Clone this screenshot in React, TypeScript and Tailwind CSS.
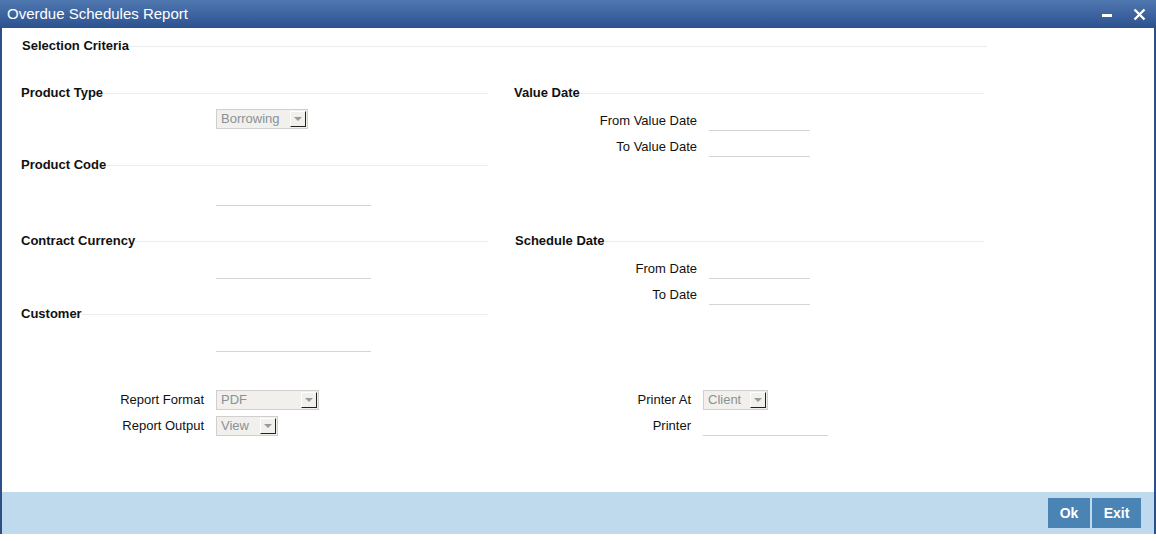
import React from "react";

const font = { fontFamily: '"Liberation Sans", Arial, sans-serif' };

function Heading({ text }: { text: string }) {
  return (
    <div className="flex items-center h-[16px]">
      <span className="text-[13px] font-bold text-[#111] leading-[16px] whitespace-nowrap">{text}</span>
      <div className="flex-1 h-px bg-[#ececec]" />
    </div>
  );
}

function Select({ value, w }: { value: string; w: string }) {
  return (
    <div className={`flex items-center h-[20px] bg-[#f1f0ec] border border-[#cfcfcf] ${w}`}>
      <span className="flex-1 pl-[4px] text-[13px] text-[#8a9098] leading-[18px]">{value}</span>
      <div className="w-[16px] h-[16px] mr-[1px] bg-[#f1f0ec] border-r border-b border-r-[#222] border-b-[#222] border-t border-l border-t-white border-l-white flex items-center justify-center">
        <svg width="8" height="5" viewBox="0 0 8 5">
          <path d="M0 0 H8 L4 4 Z" fill="#9a9a9a" />
        </svg>
      </div>
    </div>
  );
}

function LineInput({ w }: { w: string }) {
  return <div className={`h-[20px] border-b border-[#d4d4d4] ${w}`} />;
}

function Row({ label, labelW, children, mt }: { label: string; labelW: string; children: React.ReactNode; mt: string }) {
  return (
    <div className={`flex items-center h-[20px] ${mt}`}>
      <span className={`${labelW} text-right text-[13px] text-[#111] pr-[12px] leading-[16px]`}>{label}</span>
      {children}
    </div>
  );
}

export default function App() {
  return (
    <div style={font} className="w-[1156px] h-[541px] bg-white flex flex-col overflow-hidden">
      <div className="flex flex-col h-[534px] border-l-2 border-r-2 border-[#2c4f86]">
        <div className="h-[28px] flex items-center justify-between bg-gradient-to-b from-[#5078b0] to-[#2c5190] -mx-[2px] px-[7px]">
          <span className="text-white text-[15px] leading-[18px]">Overdue Schedules Report</span>
          <div className="flex items-center gap-[21px] pr-[3px]">
            <div className="w-[10px] h-[3px] bg-white mt-[2px]" />
            <svg width="13" height="13" viewBox="0 0 13 13">
              <path d="M1.5 1.5 L11.5 11.5 M11.5 1.5 L1.5 11.5" stroke="white" strokeWidth="2.4" />
            </svg>
          </div>
        </div>

        <div className="h-[464px] flex flex-col">
          <div className="mt-[10px] ml-[20px] w-[965px]">
            <Heading text="Selection Criteria" />
          </div>

          <div className="flex items-start mt-[31px]">
            <div className="ml-[19px] w-[467px] flex flex-col">
              <Heading text="Product Type" />
              <div className="mt-[8px] ml-[195px]">
                <Select value="Borrowing" w="w-[92px]" />
              </div>
              <div className="mt-[28px]">
                <Heading text="Product Code" />
              </div>
              <div className="mt-[13px] ml-[195px]">
                <LineInput w="w-[155px]" />
              </div>
              <div className="mt-[27px]">
                <Heading text="Contract Currency" />
              </div>
              <div className="mt-[10px] ml-[195px]">
                <LineInput w="w-[155px]" />
              </div>
              <div className="mt-[27px]">
                <Heading text="Customer" />
              </div>
              <div className="mt-[10px] ml-[195px]">
                <LineInput w="w-[155px]" />
              </div>
            </div>

            <div className="ml-[26px] w-[470px] flex flex-col">
              <Heading text="Value Date" />
              <Row label="From Value Date" labelW="w-[195px]" mt="mt-[10px]">
                <LineInput w="w-[101px]" />
              </Row>
              <Row label="To Value Date" labelW="w-[195px]" mt="mt-[6px]">
                <LineInput w="w-[101px]" />
              </Row>
              <div className="mt-[76px] ml-[1px]">
                <Heading text="Schedule Date" />
              </div>
              <Row label="From Date" labelW="w-[195px]" mt="mt-[10px]">
                <LineInput w="w-[101px]" />
              </Row>
              <Row label="To Date" labelW="w-[195px]" mt="mt-[6px]">
                <LineInput w="w-[101px]" />
              </Row>
            </div>
          </div>

          <div className="flex items-start mt-[38px]">
            <div className="ml-[19px] w-[492px] flex flex-col">
              <Row label="Report Format" labelW="w-[195px]" mt="mt-0">
                <Select value="PDF" w="w-[103px]" />
              </Row>
              <Row label="Report Output" labelW="w-[195px]" mt="mt-[6px]">
                <Select value="View" w="w-[62px]" />
              </Row>
            </div>
            <div className="flex flex-col">
              <Row label="Printer At" labelW="w-[190px]" mt="mt-0">
                <Select value="Client" w="w-[65px]" />
              </Row>
              <Row label="Printer" labelW="w-[190px]" mt="mt-[6px]">
                <LineInput w="w-[125px]" />
              </Row>
            </div>
          </div>
        </div>

        <div className="flex-1 bg-[#bfdaed] flex items-start justify-end pt-[6px] pr-[13px] gap-[2px]">
          <button className="w-[42px] h-[30px] bg-[#4a84b4] text-white text-[14px] font-bold">Ok</button>
          <button className="w-[49px] h-[30px] bg-[#4a84b4] text-white text-[14px] font-bold">Exit</button>
        </div>
      </div>
    </div>
  );
}
